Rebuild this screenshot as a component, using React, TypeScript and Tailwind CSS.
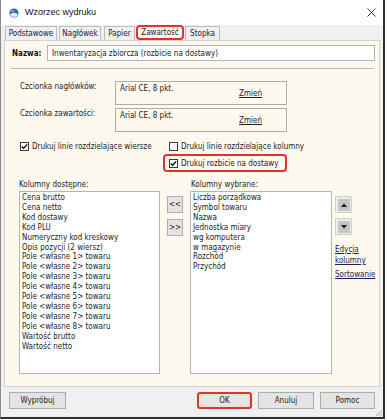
import React from "react";

const leftCols = [
  "Cena brutto",
  "Cena netto",
  "Kod dostawy",
  "Kod PLU",
  "Numeryczny kod kreskowy",
  "Opis pozycji (2 wiersz)",
  "Pole <własne 1> towaru",
  "Pole <własne 2> towaru",
  "Pole <własne 3> towaru",
  "Pole <własne 4> towaru",
  "Pole <własne 5> towaru",
  "Pole <własne 6> towaru",
  "Pole <własne 7> towaru",
  "Pole <własne 8> towaru",
  "Wartość brutto",
  "Wartość netto",
];

const rightCols = [
  "Liczba porządkowa",
  "Symbol towaru",
  "Nazwa",
  "Jednostka miary",
  "wg komputera",
  "w magazynie",
  "Rozchód",
  "Przychód",
];

const Checkbox = ({ checked }: { checked?: boolean }) => (
  <span className="w-[9px] h-[9px] border border-[#3a3a3a] bg-white flex items-center justify-center shrink-0">
    {checked && (
      <svg width="7" height="7" viewBox="0 0 7 7">
        <path d="M0.8 3.4 L2.7 5.3 L6.2 1.4" stroke="#111" strokeWidth="1.4" fill="none" />
      </svg>
    )}
  </span>
);

const Btn = ({ label, w }: { label: string; w: string }) => (
  <div className={`${w} h-[17px] bg-[#e4e4e4] border border-[#adadad] flex items-center justify-center`}>
    {label}
  </div>
);

const ArrowBtn = ({ up }: { up?: boolean }) => (
  <div className="w-[17px] h-[17px] border border-[#cfcfcf] bg-[#ececec] flex items-center justify-center">
    <div className="w-[12px] h-[12px] bg-[#c6c6c6] flex items-center justify-center">
      <svg width="6" height="4" viewBox="0 0 6 4">
        <path d={up ? "M0 4 L3 0.5 L6 4 Z" : "M0 0 L3 3.5 L6 0 Z"} fill="#111" />
      </svg>
    </div>
  </div>
);

const Tab = ({ label, w }: { label: string; w: string }) => (
  <div className={`${w} h-[14px] border border-b-0 border-[#bdbdbd] bg-[#f0f0f0] flex items-center justify-center`}>
    {label}
  </div>
);

const App = () => {
  return (
    <div className="w-[387px] h-[420px] bg-white overflow-hidden font-['DejaVu_Sans_Condensed','Liberation_Sans',Arial,sans-serif] text-[8px] leading-[9px] text-[#1c1c24]">
      <div className="w-[385px] h-[419px] flex flex-col bg-[#f0f0f0] border-l border-l-[#8a8a8a] border-r-2 border-r-[#2e2e2e] border-b-2 border-b-[#2e2e2e]">
        {/* title bar */}
        <div className="h-[25px] bg-white flex items-center pl-[8px] pr-[7px] shrink-0">
          <svg width="10" height="10" viewBox="0 0 10 10">
            <circle cx="5" cy="5" r="4.6" fill="#2f6fb3" />
            <path d="M1.2 6.2 Q5 3.8 8.8 6.2 L8 8 Q5 10 2 8 Z" fill="#e8f1fa" />
            <circle cx="3.6" cy="3.4" r="1.1" fill="#9cc6ec" />
          </svg>
          <span className="ml-[6px] text-[9px] text-[#111] font-['Liberation_Sans',Arial,sans-serif]">Wzorzec wydruku</span>
          <svg className="ml-auto" width="9" height="9" viewBox="0 0 9 9">
            <path d="M0.5 0.5 L8.5 8.5 M8.5 0.5 L0.5 8.5" stroke="#222" strokeWidth="0.9" />
          </svg>
        </div>

        {/* tabs */}
        <div className="h-[15px] flex items-end pl-[4px] shrink-0">
          <Tab label="Podstawowe" w="w-[52px]" />
          <div className="ml-[2px]">
            <Tab label="Nagłówek" w="w-[42px]" />
          </div>
          <div className="ml-[3px]">
            <Tab label="Papier" w="w-[31px]" />
          </div>
          <div className="ml-[1px] w-[48px] h-[15px] border-2 border-[#e0332f] rounded-[4px] flex items-center justify-center bg-[#fdf9ee]">
            Zawartość
          </div>
          <div className="ml-[1px]">
            <Tab label="Stopka" w="w-[35px]" />
          </div>
        </div>

        {/* panel */}
        <div className="mx-[3px] h-[347px] bg-[#fdf9ee] border border-[#d6d3cb] shrink-0 flex flex-col">
          <div className="mt-[4px] h-[16px] flex items-center">
            <span className="pl-[7px] w-[42px] font-bold text-[#111]">Nazwa:</span>
            <div className="w-[328px] h-[16px] bg-white border border-[#b4b4b4] flex items-center pl-[4px]">
              Inwentaryzacja zbiorcza (rozbicie na dostawy)
            </div>
          </div>
          <div className="mt-[7px] ml-[6px] w-[363px] h-px bg-[#b9b9b9]" />

          <div className="mt-[12px] flex pl-[15px]">
            <span className="w-[95px] pt-[1px]">Czcionka nagłówków:</span>
            <div className="w-[172px] h-[24px] border border-[#ababab] flex items-start">
              <span className="pl-[4px] pt-[2px]">Arial CE, 8 pkt.</span>
              <span className="ml-auto mr-[24px] mt-[7px] underline">Zmień</span>
            </div>
          </div>
          <div className="mt-[3px] flex pl-[15px]">
            <span className="w-[95px] pt-[1px]">Czcionka zawartości:</span>
            <div className="w-[172px] h-[24px] border border-[#ababab] flex items-start">
              <span className="pl-[4px] pt-[2px]">Arial CE, 8 pkt.</span>
              <span className="ml-auto mr-[24px] mt-[7px] underline">Zmień</span>
            </div>
          </div>

          <div className="mt-[10px] h-[9px] pl-[15px] grid grid-cols-[149px_auto]">
            <div className="flex items-center gap-[3px]">
              <Checkbox checked />
              <span>Drukuj linie rozdzielające wiersze</span>
            </div>
            <div className="flex items-center gap-[3px]">
              <Checkbox />
              <span>Drukuj linie rozdzielające kolumny</span>
            </div>
          </div>
          <div className="mt-[3px] ml-[158px] w-[124px] h-[18px] border-2 border-[#e0332f] rounded-[4px] flex items-center gap-[3px] pl-[4px]">
            <Checkbox checked />
            <span>Drukuj rozbicie na dostawy</span>
          </div>

          <div className="mt-[8px] flex pl-[14px]">
            <div className="flex flex-col">
              <span className="h-[11px]">Kolumny dostępne:</span>
              <div className="w-[141px] h-[183px] bg-white border border-[#b4b4b4] pl-[2px] pt-[1px] leading-[9.9px]">
                {leftCols.map((c) => (
                  <div key={c}>{c}</div>
                ))}
              </div>
            </div>
            <div className="ml-[7px] pt-[16px] flex flex-col gap-[6px]">
              <Btn label="<<" w="w-[16px]" />
              <Btn label=">>" w="w-[16px]" />
            </div>
            <div className="ml-[7px] flex flex-col">
              <span className="h-[11px] pl-px">Kolumny wybrane:</span>
              <div className="w-[142px] h-[183px] bg-white border border-[#b4b4b4] pl-[2px] pt-[1px] leading-[9.9px]">
                {rightCols.map((c) => (
                  <div key={c}>{c}</div>
                ))}
              </div>
            </div>
            <div className="ml-[3px] pt-[16px] flex flex-col">
              <ArrowBtn up />
              <div className="mt-[5px]">
                <ArrowBtn />
              </div>
              <div className="mt-[10px] underline leading-[10.7px] text-[#1c2450]">
                Edycja
                <br />
                kolumny
              </div>
              <div className="mt-[4px] underline text-[#1c2450]">Sortowanie</div>
            </div>
          </div>
        </div>

        {/* footer */}
        <div className="flex-1 relative flex items-start pt-[5px] pl-[8px]">
          <Btn label="Wypróbuj" w="w-[57px]" />
          <div className="ml-[131px] w-[55px] h-[17px] border-2 border-[#e0332f] rounded-[3px] bg-[#e4e4e4] flex items-center justify-center">
            OK
          </div>
          <div className="ml-[6px]">
            <Btn label="Anuluj" w="w-[56px]" />
          </div>
          <div className="ml-[6px]">
            <Btn label="Pomoc" w="w-[55px]" />
          </div>
          <svg className="absolute right-0 bottom-0" width="8" height="8" viewBox="0 0 8 8">
            <path d="M7 1 L1 7 M7 4 L4 7 M7 6.5 L6.5 7" stroke="#a8a8a8" strokeWidth="0.9" />
          </svg>
        </div>
      </div>
    </div>
  );
};

export default App;
